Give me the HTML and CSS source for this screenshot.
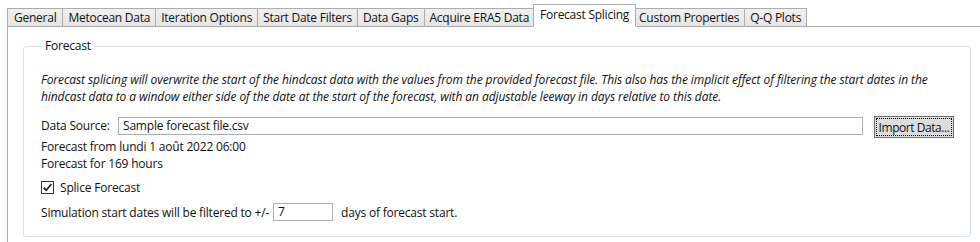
FILE: index.html
```html
<!DOCTYPE html>
<html>
<head>
<meta charset="utf-8">
<link rel="stylesheet" href="styles.css">
</head>
<body>
<div class="root">
  <div class="tabstrip">
    <div class="tab">General</div>
    <div class="tab">Metocean Data</div>
    <div class="tab">Iteration Options</div>
    <div class="tab">Start Date Filters</div>
    <div class="tab">Data Gaps</div>
    <div class="tab">Acquire ERA5 Data</div>
    <div class="tab selected">Forecast Splicing</div>
    <div class="tab">Custom Properties</div>
    <div class="tab">Q-Q Plots</div>
  </div>
  <div class="panel">
    <div class="group-wrap">
      <fieldset class="group">
        <legend>Forecast</legend>
        <p class="desc">Forecast splicing will overwrite the start of the hindcast data with the values from the provided forecast file. This also has the implicit effect of filtering the start dates in the hindcast data to a window either side of the date at the start of the forecast, with an adjustable leeway in days relative to this date.</p>
        <div class="source-row">
          <span class="label">Data Source:</span>
          <div class="textbox wide">Sample forecast file.csv</div>
          <div class="button"><span class="focus">Import Data...</span></div>
        </div>
        <div class="info">Forecast from lundi 1 août 2022 06:00</div>
        <div class="info">Forecast for 169 hours</div>
        <div class="check-row">
          <span class="checkbox"><svg width="11" height="11" viewBox="0 0 11 11"><path d="M1.6 5.6 L4.2 8.2 L9.4 2" fill="none" stroke="#1f1f1f" stroke-width="1.7"/></svg></span>
          <span>Splice Forecast</span>
        </div>
        <div class="filter-row">
          <span class="filter-label">Simulation start dates will be filtered to +/-</span>
          <div class="textbox small">7</div>
          <span>days of forecast start.</span>
        </div>
      </fieldset>
    </div>
  </div>
</div>
</body>
</html>
```
FILE: styles.css
```css
html, body {
  margin: 0;
  padding: 0;
  background: #ffffff;
  overflow: hidden;
}
body {
  font-family: "Open Sans", "Noto Sans", sans-serif;
  font-size: 12px;
  font-weight: 400;
  color: #111111;
  width: 980px;
  height: 242px;
}
.root {
  padding: 4px 0 0 7px;
}
.tabstrip {
  display: flex;
  align-items: flex-end;
  height: 23px;
  position: relative;
  z-index: 2;
}
.tab {
  box-sizing: border-box;
  height: 19px;
  padding: 0 5px;
  line-height: 17px;
  border: 1px solid #acacac;
  background: linear-gradient(#f0f0f0, #e5e5e5);
  margin-left: -1px;
  white-space: nowrap;
  letter-spacing: -0.25px;
}
.tab:first-child {
  margin-left: 0;
  padding: 0 6px;
}
.tab.selected {
  height: 23px;
  line-height: 20px;
  background: #ffffff;
  border-bottom-color: #ffffff;
  margin-left: -2px;
  margin-right: -2px;
  padding: 0 6px;
  position: relative;
  z-index: 3;
}
.panel {
  border-top: 1px solid #acacac;
  border-left: 1px solid #acacac;
  margin-top: -1px;
  height: 216px;
  padding: 12px 0 0 15px;
  box-sizing: border-box;
}
.group-wrap {
  width: 948px;
}
.group {
  margin: 0;
  min-width: 0;
  width: 100%;
  height: 198px;
  box-sizing: border-box;
  border: 1px solid #d5dfe5;
  border-radius: 3px;
  padding: 10px 16px 0 17px;
}
.group legend {
  padding: 0 3px 0 2px;
  margin-left: 2px;
  line-height: 14px;
  letter-spacing: -0.2px;
}
.desc {
  margin: 8px 0 0 0;
  font-style: italic;
  line-height: 17px;
  letter-spacing: -0.08px;
}
.source-row {
  display: flex;
  align-items: flex-start;
  margin-top: 11px;
  height: 22px;
}
.label {
  width: 77px;
  line-height: 20px;
  letter-spacing: -0.2px;
}
.textbox {
  box-sizing: border-box;
  border: 1px solid #abadb3;
  height: 18px;
  line-height: 16px;
  padding: 0 4px;
  background: #ffffff;
  letter-spacing: -0.2px;
}
.textbox.wide {
  width: 745px;
  margin-top: 1px;
}
.button {
  margin-left: 11px;
  box-sizing: border-box;
  width: 80px;
  height: 22px;
  border: 1px solid #707070;
  background: #dddddd;
  padding: 1px;
}
.button .focus {
  display: block;
  height: 100%;
  box-sizing: border-box;
  border: 1px dotted #000000;
  text-align: center;
  line-height: 17px;
  white-space: nowrap;
  letter-spacing: -0.45px;
}
.info {
  line-height: 17px;
  letter-spacing: -0.2px;
}
.check-row {
  display: flex;
  align-items: center;
  margin-top: 8px;
  height: 14px;
  letter-spacing: -0.2px;
}
.checkbox {
  box-sizing: border-box;
  width: 13px;
  height: 13px;
  border: 1px solid #333333;
  background: #ffffff;
  display: flex;
  align-items: center;
  justify-content: center;
  margin-right: 6px;
}
.filter-row {
  display: flex;
  align-items: center;
  margin-top: 9px;
  height: 18px;
  letter-spacing: -0.2px;
}
.textbox.small {
  width: 60px;
  margin: 0 8px 0 4px;
}
```
